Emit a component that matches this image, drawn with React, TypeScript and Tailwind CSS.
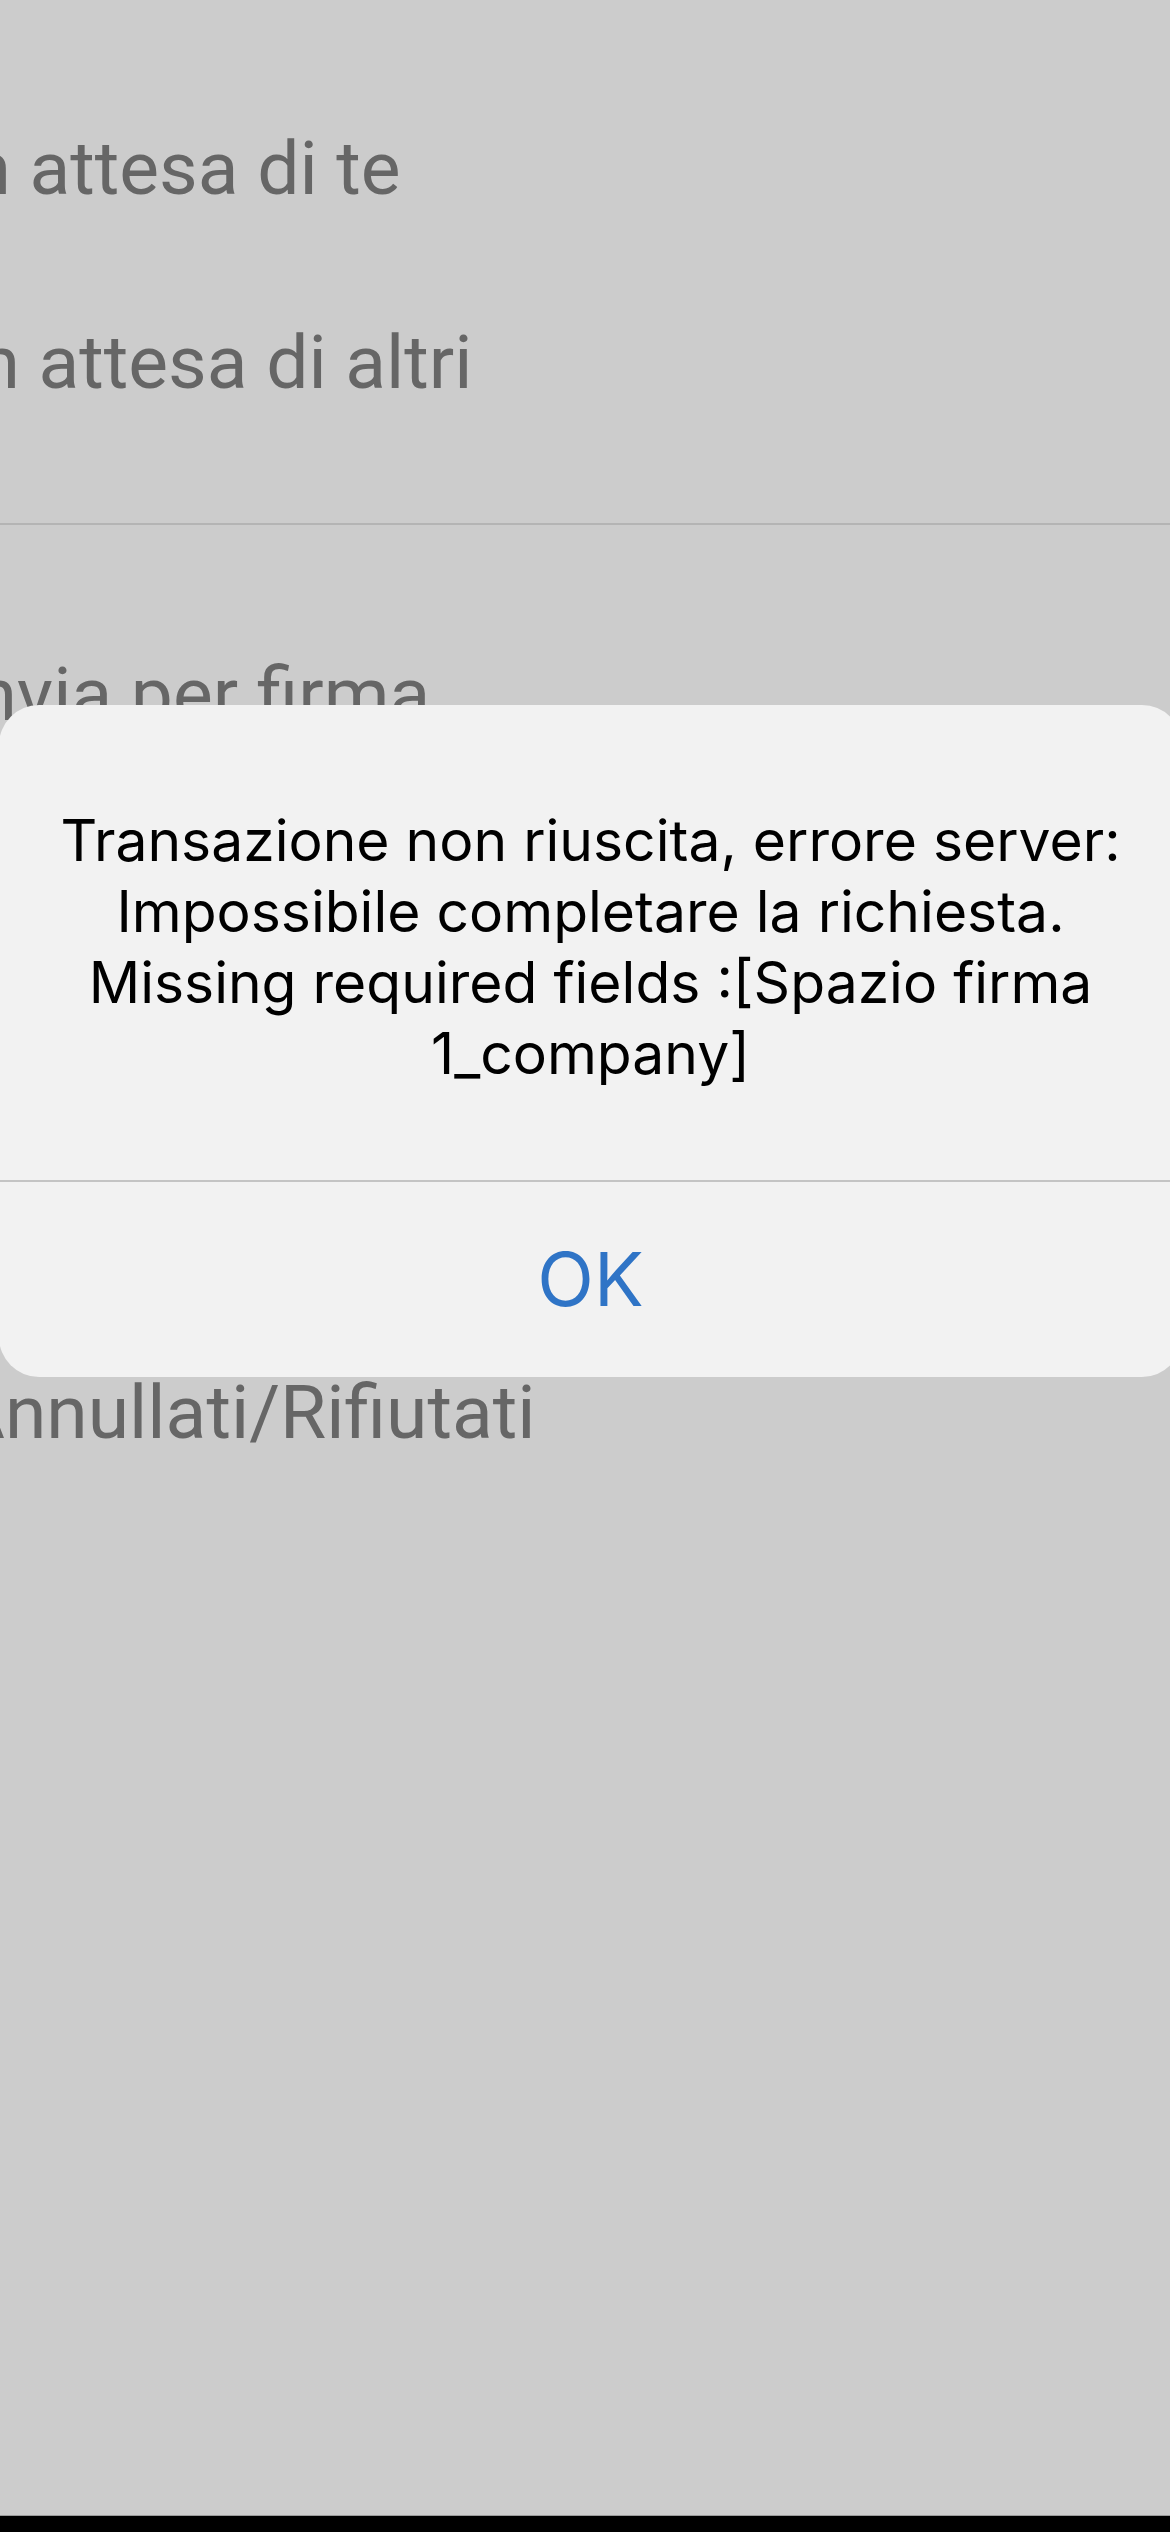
import React from 'react';

const rowText = 'text-[75px] text-[#666666] whitespace-nowrap';

function AlertDialog() {
  return (
    <div className="absolute left-[-1px] right-[-12px] top-[705px] h-[672px] flex flex-col overflow-hidden rounded-[40px] bg-[#f2f2f2]">
      <div
        className="flex-1 px-[50px] pt-[100px] text-center text-[57px] leading-[71px] text-black"
        style={{ fontFamily: 'Inter, "Noto Sans", sans-serif' }}
      >
        <p>Transazione non riuscita, errore server:</p>
        <p>Impossibile completare la richiesta.</p>
        <p>Missing required fields :[Spazio firma</p>
        <p>1_company]</p>
      </div>
      <div className="h-[2px] bg-[#c4c4c4]" />
      <button
        className="h-[195px] w-full text-center text-[74px] text-[#2f74c6]"
        style={{ fontFamily: 'Inter, "Noto Sans", sans-serif' }}
      >
        OK
      </button>
    </div>
  );
}

export default function App() {
  return (
    <div
      className="relative flex h-[2532px] w-full flex-col overflow-hidden bg-[#cccccc]"
      style={{ fontFamily: 'Roboto, "Noto Sans", sans-serif' }}
    >
      <div className="flex-1 pt-[71px]">
        <div className={`${rowText} ml-[-51px] leading-[194px]`}>In attesa di te</div>
        <div className={`${rowText} ml-[-42px] leading-[194px]`}>In attesa di altri</div>
        <div className="mt-[64px] h-[2px] bg-[#b4b4b4]" />
        <div className={`${rowText} ml-[-45px] mt-[79px] leading-[180px]`}>Invia per firma</div>
        <div className={`${rowText} ml-[-44px] mt-[538px] leading-[180px]`}>Annullati/Rifiutati</div>
      </div>
      <div className="h-[17px] border-t border-[#9a9a9a] bg-black" />
      <AlertDialog />
    </div>
  );
}
